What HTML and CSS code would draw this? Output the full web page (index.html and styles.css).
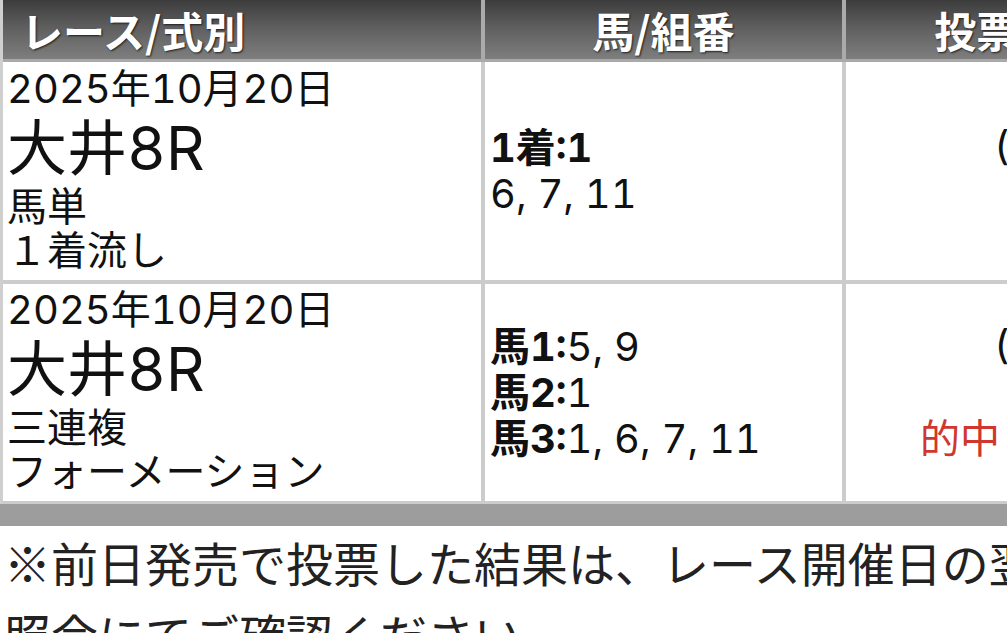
FILE: index.html
```html
<!DOCTYPE html>
<html lang="ja">
<head>
<meta charset="utf-8">
<title>投票内容照会</title>
<link rel="stylesheet" href="styles.css">
</head>
<body>
<div class="page">
  <table class="bets">
    <colgroup>
      <col class="c-race">
      <col class="c-horse">
      <col class="c-vote">
    </colgroup>
    <thead>
      <tr>
        <th class="h-left">レース/式別</th>
        <th>馬/組番</th>
        <th>投票金額/払戻</th>
      </tr>
    </thead>
    <tbody>
      <tr>
        <td class="race">
          <div class="date">2025年10月20日</div>
          <div class="venue">大井8R</div>
          <div class="kind">馬単</div>
          <div class="kind">１着流し</div>
        </td>
        <td class="horses">
          <div><b>1着:1</b></div>
          <div>6, 7, 11</div>
        </td>
        <td class="vote">
          <div>(100円)</div>
          <div>3点</div>
        </td>
      </tr>
      <tr class="last">
        <td class="race">
          <div class="date">2025年10月20日</div>
          <div class="venue">大井8R</div>
          <div class="kind">三連複</div>
          <div class="kind">フォーメーション</div>
        </td>
        <td class="horses">
          <div><b>馬1:</b>5, 9</div>
          <div><b>馬2:</b>1</div>
          <div><b>馬3:</b>1, 6, 7, 11</div>
        </td>
        <td class="vote">
          <div>(100円)</div>
          <div>6点</div>
          <div class="hit">的中 123,450円</div>
        </td>
      </tr>
    </tbody>
  </table>
  <div class="band"></div>
  <p class="note">※前日発売で投票した結果は、レース開催日の翌日以降に照会にてご確認ください。</p>
</div>
</body>
</html>
```

FILE: styles.css
```css
html, body {
  margin: 0;
  padding: 0;
  background: #fff;
  overflow: hidden;
}

body {
  font-family: "Inter", "Noto Sans CJK JP", "Noto Sans", sans-serif;
  font-variant-numeric: tabular-nums;
  color: #111;
}

.page {
  width: 1300px;
}

.bets {
  border-collapse: separate;
  border-spacing: 0;
  table-layout: fixed;
  width: 1295px;
  border-left: 3px solid #cfcfcf;
}

.c-race { width: 482px; }
.c-horse { width: 361px; }
.c-vote { width: 449px; }

.bets th {
  box-sizing: border-box;
  height: 62px;
  padding: 0;
  background: linear-gradient(to bottom, #3c3c3c 0%, #5e5e5e 45%, #7e7e7e 100%);
  border-right: 4px solid #ababab;
  border-bottom: 3px solid #a9a9a9;
  color: #fff;
  font-family: "Noto Sans CJK JP", sans-serif;
  font-size: 42px;
  font-weight: 700;
  line-height: 59px;
  text-align: center;
  text-shadow: 1px 1px 2px #1e1e1e;
  white-space: nowrap;
}

.bets th.h-left {
  text-align: left;
  padding-left: 18px;
}

.bets td {
  border-right: 4px solid #cccccc;
  border-bottom: 4px solid #cccccc;
  vertical-align: middle;
  font-size: 40px;
  line-height: 46px;
  white-space: nowrap;
}

.bets tr.last td {
  border-bottom-width: 3px;
}

.bets td.race {
  padding: 5px 4px 7px 4px;
  line-height: 44px;
}

.bets tr.last td.race {
  padding-top: 4px;
}

.date {
  font-size: 40px;
  line-height: 44px;
}

.venue {
  font-size: 60px;
  line-height: 74px;
}

.kind {
  font-size: 40px;
  line-height: 44px;
}

.bets td.horses {
  padding: 0 4px 0 5px;
}

.bets td.horses b {
  font-weight: 700;
}

.bets td.vote {
  text-align: center;
  padding: 0;
}

.hit {
  color: #d0372f;
}

.band {
  height: 22px;
  background: #9d9d9d;
}

.note {
  margin: 0;
  padding: 0 0 0 4px;
  font-family: "Noto Sans CJK JP", sans-serif;
  font-size: 47px;
  line-height: 72px;
  color: #222;
  width: 1240px;
}
```
